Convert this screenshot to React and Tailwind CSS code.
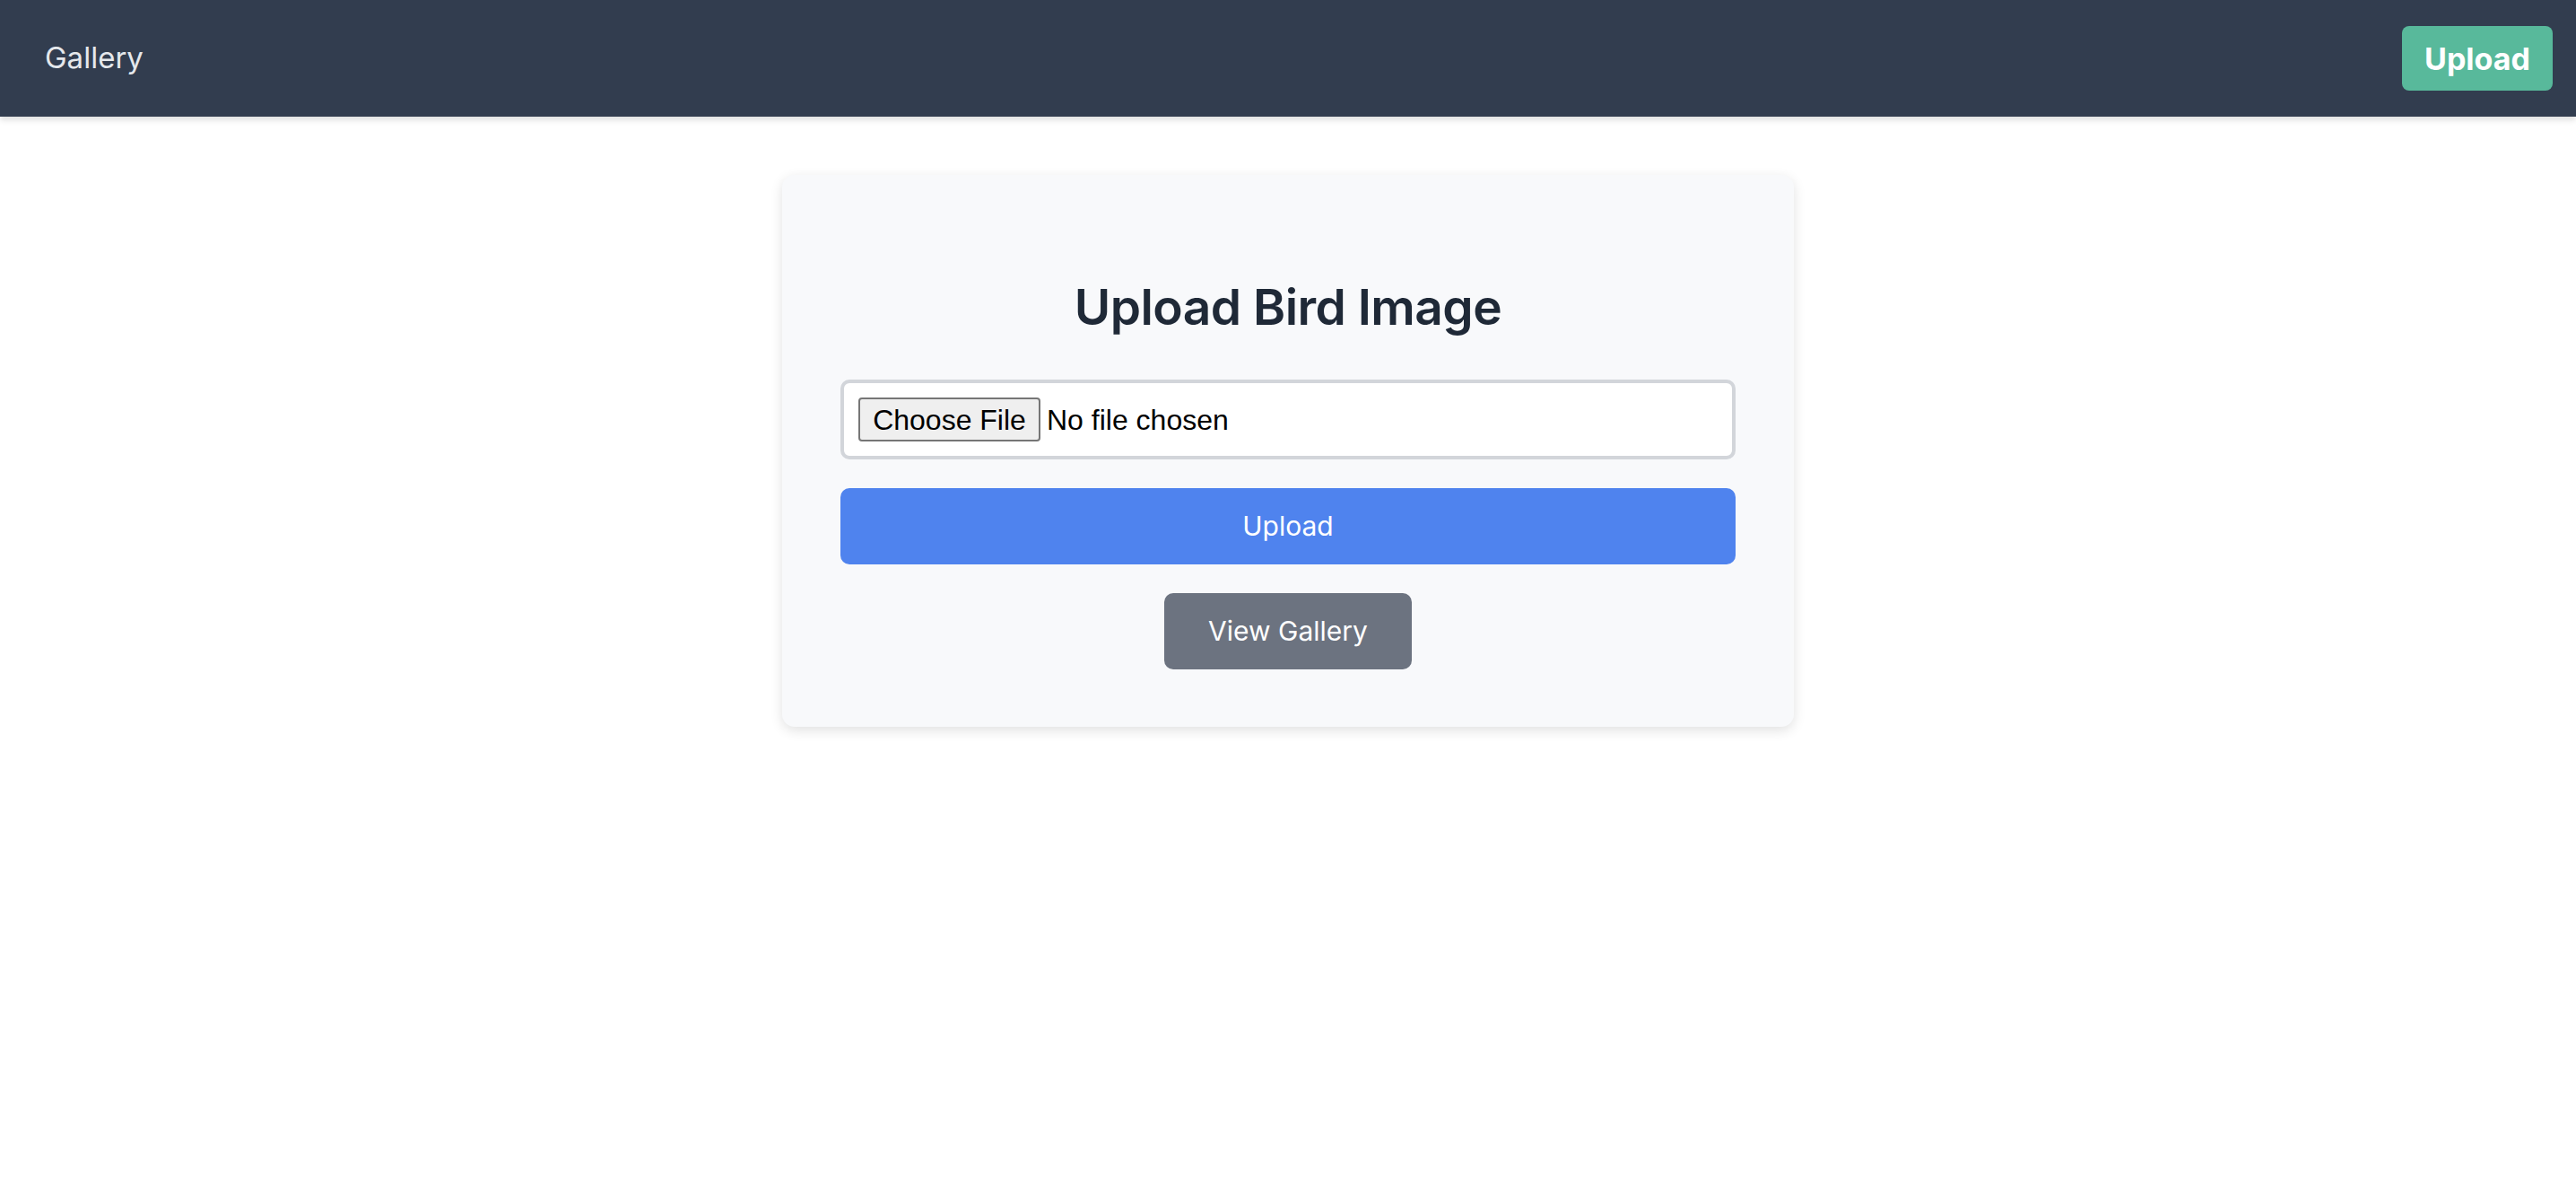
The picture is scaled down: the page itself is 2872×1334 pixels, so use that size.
export default function App() {
  return (
    <div className="min-h-screen bg-white" style={{ fontFamily: "Inter, 'Noto Sans', sans-serif" }}>
      <header className="h-[130px] bg-[#323d4f] flex items-center justify-between pl-[50px] pr-[26px] shadow-[0_4px_6px_rgba(0,0,0,0.12)]">
        <span className="text-[33px] text-[#e5e8ec]">Gallery</span>
        <button className="h-[72px] w-[168px] rounded-[8px] bg-[#58b99b] text-white text-[34px] font-bold">Upload</button>
      </header>
      <main className="flex justify-center pt-[65px]">
        <div className="w-[1128px] rounded-[14px] bg-[#f8f9fb] shadow-[0_4px_14px_rgba(0,0,0,0.12)] px-[65px] pt-[113px] pb-[64px] flex flex-col items-center">
          <h1 className="text-[55px] leading-[68px] tracking-[-0.55px] font-semibold text-[#1f2937] mb-[47px]">Upload Bird Image</h1>
          <div className="w-full h-[89px] rounded-[10px] border-[4px] border-[#d2d5da] bg-white flex items-center pl-[16px]" style={{ fontFamily: "'Liberation Sans', Arial, sans-serif" }}>
            <div className="h-[49px] w-[203px] flex items-center justify-center rounded-[4px] border-2 border-[#767676] bg-[#efefef] text-[32px] text-black">Choose File</div>
            <span className="ml-[7px] text-[32px] text-black">No file chosen</span>
          </div>
          <button className="mt-[32px] w-full h-[85px] rounded-[10px] bg-[#4f83ee] text-white text-[30px]">Upload</button>
          <button className="mt-[32px] w-[276px] h-[85px] rounded-[10px] bg-[#6c7380] text-white text-[30px]">View Gallery</button>
        </div>
      </main>
    </div>
  );
}
